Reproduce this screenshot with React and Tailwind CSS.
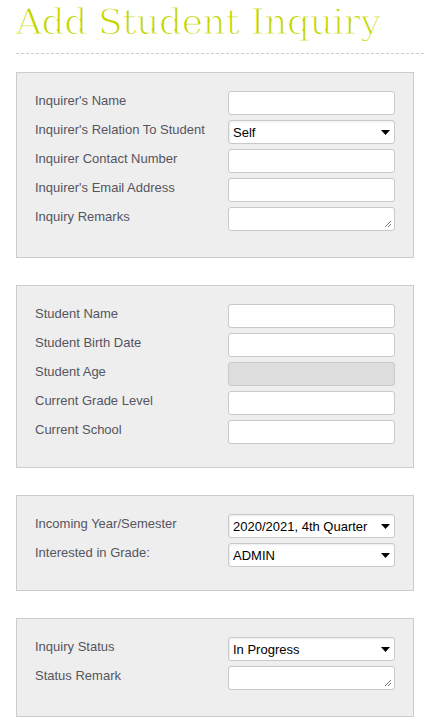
import React from "react";

const Input = ({ disabled }) => (
  <div
    className={`h-[24px] w-[167px] rounded-[3px] border border-[#c9c9c9] ${
      disabled ? "bg-[#dddddd]" : "bg-white"
    }`}
  />
);

const TextArea = () => (
  <div className="relative h-[24px] w-[167px] rounded-[3px] border border-[#c9c9c9] bg-white">
    <svg className="absolute right-[2px] bottom-[2px]" width="9" height="9" viewBox="0 0 9 9">
      <path d="M8 2 L2 8 M8 5 L5 8" stroke="#777" strokeWidth="1" fill="none" />
    </svg>
  </div>
);

const Select = ({ value }) => (
  <div className="flex h-[24px] w-[167px] items-center justify-between rounded-[3px] border border-[#c9c9c9] bg-white pl-[4px] pr-[4px] shadow-[inset_1px_1px_2px_rgba(0,0,0,0.08)]">
    <span className="text-[13px] leading-none text-black" style={{ fontFamily: '"Liberation Sans", Arial, sans-serif' }}>
      {value}
    </span>
    <svg width="9" height="5" viewBox="0 0 9 5">
      <path d="M0 0 L9 0 L4.5 5 Z" fill="#000" />
    </svg>
  </div>
);

const Row = ({ label, children }) => (
  <div className="flex">
    <div className="w-[193px] text-[13px] leading-[20px] text-[#555560]">{label}</div>
    {children}
  </div>
);

const Panel = ({ children, pb }) => (
  <div className={`w-[398px] border border-[#cccccc] bg-[#eeeeee] pl-[18px] pt-[18px] ${pb}`}>
    <div className="flex flex-col gap-[5px]">{children}</div>
  </div>
);

export default function App() {
  return (
    <div
      className="min-h-[727px] w-[424px] bg-white"
      style={{ fontFamily: '"Liberation Sans", Arial, sans-serif' }}
    >
      <div className="pl-[16px]">
        <h1
          className="h-[53px] text-[36px] leading-[44px] text-[#c2d400] [-webkit-text-stroke:1.2px_#ffffff]"
          style={{ fontFamily: '"DejaVu Serif", serif', letterSpacing: "-0.4px" }}
        >
          Add Student Inquiry
        </h1>
        <div className="border-t border-dashed border-[#cccccc]" />
        <div className="mt-[18px] flex flex-col gap-[27px]">
          <Panel pb="pb-[26px]">
            <Row label="Inquirer's Name"><Input /></Row>
            <Row label="Inquirer's Relation To Student"><Select value="Self" /></Row>
            <Row label="Inquirer Contact Number"><Input /></Row>
            <Row label="Inquirer's Email Address"><Input /></Row>
            <Row label="Inquiry Remarks"><TextArea /></Row>
          </Panel>
          <Panel pb="pb-[23px]">
            <Row label="Student Name"><Input /></Row>
            <Row label="Student Birth Date"><Input /></Row>
            <Row label="Student Age"><Input disabled /></Row>
            <Row label="Current Grade Level"><Input /></Row>
            <Row label="Current School"><Input /></Row>
          </Panel>
          <Panel pb="pb-[23px]">
            <Row label="Incoming Year/Semester"><Select value="2020/2021, 4th Quarter" /></Row>
            <Row label="Interested in Grade:"><Select value="ADMIN" /></Row>
          </Panel>
          <Panel pb="pb-[26px]">
            <Row label="Inquiry Status"><Select value="In Progress" /></Row>
            <Row label="Status Remark"><TextArea /></Row>
          </Panel>
        </div>
      </div>
    </div>
  );
}
